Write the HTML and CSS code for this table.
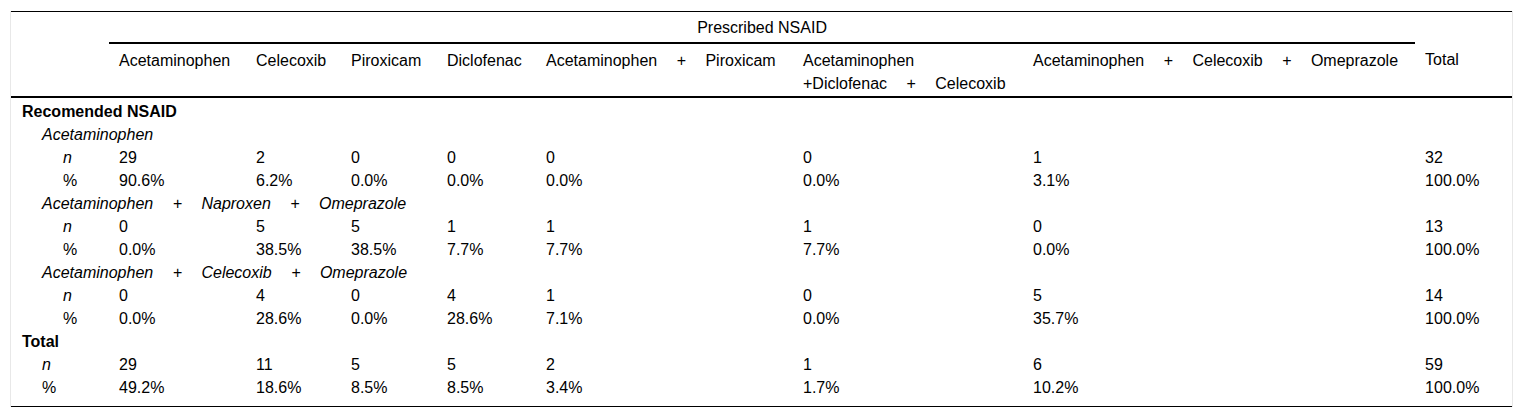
FILE: index.html
```html
<!DOCTYPE html>
<html lang="en">
<head>
<meta charset="utf-8">
<title>Recommended vs prescribed NSAID</title>
<link rel="stylesheet" href="styles.css">
</head>
<body>
<div class="wrap">
<table class="ct">
  <colgroup>
    <col class="c-label">
    <col class="c-ac">
    <col class="c-ce">
    <col class="c-pi">
    <col class="c-di">
    <col class="c-ap">
    <col class="c-adc">
    <col class="c-aco">
    <col class="c-tot">
  </colgroup>
  <thead>
    <tr class="h1">
      <th></th>
      <th colspan="7" class="span">Prescribed NSAID</th>
      <th></th>
    </tr>
    <tr class="h2">
      <th></th>
      <th>Acetaminophen</th>
      <th>Celecoxib</th>
      <th>Piroxicam</th>
      <th>Diclofenac</th>
      <th class="wide">Acetaminophen + Piroxicam</th>
      <th class="wide">Acetaminophen +Diclofenac + Celecoxib</th>
      <th class="wide">Acetaminophen + Celecoxib + Omeprazole</th>
      <th>Total</th>
    </tr>
  </thead>
  <tbody>
    <tr class="first"><td colspan="9" class="l0">Recomended NSAID</td></tr>
    <tr><td colspan="9" class="l1">Acetaminophen</td></tr>
    <tr><td class="l2 it">n</td><td>29</td><td>2</td><td>0</td><td>0</td><td>0</td><td>0</td><td>1</td><td>32</td></tr>
    <tr><td class="l2">%</td><td>90.6%</td><td>6.2%</td><td>0.0%</td><td>0.0%</td><td>0.0%</td><td>0.0%</td><td>3.1%</td><td>100.0%</td></tr>
    <tr><td colspan="9" class="l1 wide">Acetaminophen + Naproxen + Omeprazole</td></tr>
    <tr><td class="l2 it">n</td><td>0</td><td>5</td><td>5</td><td>1</td><td>1</td><td>1</td><td>0</td><td>13</td></tr>
    <tr><td class="l2">%</td><td>0.0%</td><td>38.5%</td><td>38.5%</td><td>7.7%</td><td>7.7%</td><td>7.7%</td><td>0.0%</td><td>100.0%</td></tr>
    <tr><td colspan="9" class="l1 wide">Acetaminophen + Celecoxib + Omeprazole</td></tr>
    <tr><td class="l2 it">n</td><td>0</td><td>4</td><td>0</td><td>4</td><td>1</td><td>0</td><td>5</td><td>14</td></tr>
    <tr><td class="l2">%</td><td>0.0%</td><td>28.6%</td><td>0.0%</td><td>28.6%</td><td>7.1%</td><td>0.0%</td><td>35.7%</td><td>100.0%</td></tr>
    <tr><td colspan="9" class="l0">Total</td></tr>
    <tr><td class="l1n it">n</td><td>29</td><td>11</td><td>5</td><td>5</td><td>2</td><td>1</td><td>6</td><td>59</td></tr>
    <tr class="last"><td class="l1n">%</td><td>49.2%</td><td>18.6%</td><td>8.5%</td><td>8.5%</td><td>3.4%</td><td>1.7%</td><td>10.2%</td><td>100.0%</td></tr>
  </tbody>
</table>
</div>
</body>
</html>
```

FILE: styles.css
```css
html, body {
  margin: 0;
  padding: 0;
  background: #fff;
}

.wrap {
  margin: 11px 11px 0 10px;
  border-left: 1px solid #e8e8e8;
  border-right: 1px solid #e8e8e8;
}

.ct {
  width: 100%;
  table-layout: fixed;
  border-collapse: collapse;
  border-top: 1px solid #000;
  border-bottom: 1px solid #000;
  font-family: "Liberation Sans", Arial, sans-serif;
  font-size: 16px;
  line-height: 23px;
  color: #000;
}

.c-label { width: 98px; }
.c-ac { width: 137px; }
.c-ce { width: 95px; }
.c-pi { width: 96px; }
.c-di { width: 99px; }
.c-ap { width: 257px; }
.c-adc { width: 230px; }
.c-aco { width: 392px; }
.c-tot { width: 97px; }

.ct th {
  font-weight: normal;
  text-align: left;
  vertical-align: top;
  padding: 4px 10px 3px;
}

.ct .h1 .span {
  text-align: center;
  border-bottom: 2px solid #000;
}

.ct .h2 th {
  border-bottom: 2px solid #000;
  padding: 5px 10px 1px;
}

.ct td {
  padding: 0 10px;
  text-align: left;
  vertical-align: top;
  white-space: nowrap;
}

.ct .wide {
  word-spacing: 15px;
}

.ct .h2 th.wide {
  white-space: normal;
}

.ct td.l0 {
  font-weight: bold;
  padding-left: 11px;
}

.ct td.l1 {
  font-style: italic;
  padding-left: 31px;
}

.ct td.l2 {
  padding-left: 52px;
}

.ct td.l1n {
  padding-left: 31px;
}

.ct td.it {
  font-style: italic;
}

.ct .first td {
  padding-top: 2px;
}

.ct .last td {
  padding-bottom: 7px;
}
```
